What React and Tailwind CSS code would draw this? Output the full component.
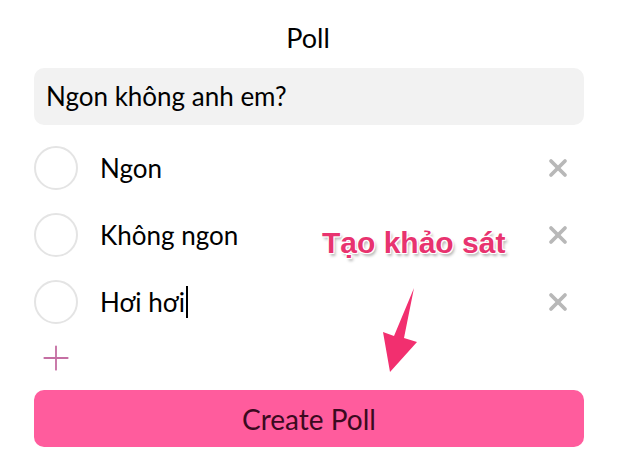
import { X, Plus } from "lucide-react";

const options = ["Ngon", "Không ngon", "Hơi hơi"];

const Arrow = () => (
  <svg className="absolute left-[378px] top-[284px]" width="44" height="92" viewBox="378 284 44 92">
    <polygon points="414,288 404,338 417,342 390,372 383,332 394,336" fill="#f22f6f" />
  </svg>
);

export default function App() {
  return (
    <div className="relative w-[624px] h-[464px] bg-white font-['Lato',sans-serif] text-black overflow-hidden">
      <div className="pl-[34px] pr-[40px] pt-[19px]">
        <h1 className="text-center text-[27px] leading-[38px] ml-[-2px]">Poll</h1>

        <div className="mt-[11px] h-[57px] rounded-[10px] bg-[#f2f2f2] flex items-center px-[12px] text-[26px]">
          Ngon không anh em?
        </div>

        <ul className="mt-[21px] flex flex-col gap-[23px]">
          {options.map((opt, i) => (
            <li key={opt} className="flex items-center h-[44px]">
              <span className="w-[44px] h-[44px] rounded-full border-2 border-[#e4e4e4] shrink-0" />
              <span className="ml-[22px] text-[26px] flex-1 flex items-center">
                {opt}
                {i === 2 && <span className="w-[2px] h-[32px] bg-black ml-[1px]" />}
              </span>
              <X className="mr-[12px] text-[#b8b8b8]" size={28} strokeWidth={3.2} />
            </li>
          ))}
        </ul>

        <Plus className="mt-[14px] ml-[2px] text-[#c56fa3]" size={40} strokeWidth={1.1} />

        <button className="mt-[12px] w-full h-[57px] rounded-[10px] bg-[#ff5c9d] text-[#3b0a20] text-[28px]">
          Create Poll
        </button>
      </div>

      <div
        className="absolute left-[322px] top-[220px] font-['Liberation_Sans',sans-serif] font-bold text-[30px] text-[#e8336f]"
        style={{ textShadow: "0 0 2px #fff, 1px 1px 0 #fff, -1px -1px 0 #fff, 1px -1px 0 #fff, -1px 1px 0 #fff, 2px 3px 3px rgba(0,0,0,0.3)" }}
      >
        Tạo khảo sát
      </div>
      <Arrow />
    </div>
  );
}
